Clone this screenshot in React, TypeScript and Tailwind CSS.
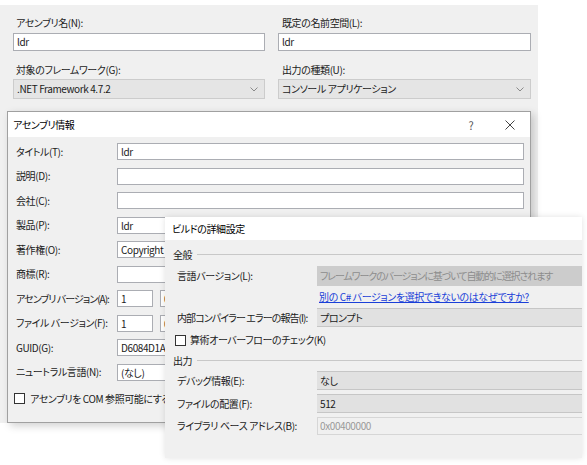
import React from "react";

function TextBox({ value = "", className = "" }: { value?: string; className?: string }) {
  return (
    <div className={"h-[17px] border border-[#abadb3] bg-white pl-[3px] leading-[15px] overflow-hidden whitespace-nowrap " + className}>
      {value}
    </div>
  );
}

function Chevron() {
  return (
    <svg width="8" height="5" viewBox="0 0 8 5" className="shrink-0">
      <path d="M0.5 0.5 L4 4 L7.5 0.5" fill="none" stroke="#8a8a8a" strokeWidth="1" />
    </svg>
  );
}

function Select({ value }: { value: string }) {
  return (
    <div className="h-[20px] border border-[#cccccc] bg-[#e5e5e5] flex items-center pl-[3px] pr-[6px]">
      <span className="flex-1 whitespace-nowrap">{value}</span>
      <Chevron />
    </div>
  );
}

function CheckBox() {
  return <div className="w-[11px] h-[11px] border border-[#333333] bg-white shrink-0" />;
}

function InfoRow({ label, tight, children }: { label: string; tight?: boolean; children: React.ReactNode }) {
  return (
    <div className="flex items-center h-[17px]">
      <div className={"w-[101px] shrink-0 whitespace-nowrap " + (tight ? "tracking-[-0.95px]" : "")}>{label}</div>
      <div className="flex-1 flex gap-[7px]">{children}</div>
    </div>
  );
}

function BuildRow({ label, tight, children, className = "" }: { label: string; tight?: boolean; children: React.ReactNode; className?: string }) {
  return (
    <div className={"flex items-center pl-[4px] " + className}>
      <div className={"w-[140px] shrink-0 whitespace-nowrap " + (tight ? "tracking-[-0.9px]" : "")}>{label}</div>
      <div className="flex-1 -mr-[2px]">{children}</div>
    </div>
  );
}

function GroupHeading({ title, className = "" }: { title: string; className?: string }) {
  return (
    <div className={"flex items-center h-[16px] " + className}>
      <span>{title}</span>
      <div className="flex-1 h-px bg-[#c8c8c8] ml-[5px] -mt-[2px]" />
    </div>
  );
}

export default function App() {
  return (
    <div className="relative w-[587px] h-[465px] overflow-hidden bg-white text-[#1b1b1b] text-[10px] tracking-[-0.4px] leading-[16px] font-['Noto_Sans_CJK_JP','Noto_Sans_CJK_SC',sans-serif] [font-feature-settings:'palt']">
      {/* project properties page */}
      <div className="absolute left-0 top-[5px] w-[538px] h-[418px] bg-[#f0f0f0]">
        <div className="grid grid-cols-[252px_253px] gap-x-[13px] pl-[13px] pt-[10px]">
          <div>
            <div className="pl-[3px]">アセンブリ名(N):</div>
            <TextBox value="ldr" className="mt-[2px] h-[18px] leading-[16px]" />
          </div>
          <div>
            <div className="pl-[4px]">既定の名前空間(L):</div>
            <TextBox value="ldr" className="mt-[2px] h-[18px] leading-[16px]" />
          </div>
          <div className="mt-[11px]">
            <div className="pl-[3px]">対象のフレームワーク(G):</div>
            <div className="mt-[1px]">
              <Select value=".NET Framework 4.7.2" />
            </div>
          </div>
          <div className="mt-[11px]">
            <div className="pl-[4px]">出力の種類(U):</div>
            <div className="mt-[1px]">
              <Select value="コンソール アプリケーション" />
            </div>
          </div>
        </div>
      </div>

      {/* assembly information dialog */}
      <div className="absolute left-[7px] top-[111px] w-[524px] h-[312px] border border-[#a0a0a0] bg-[#f0f0f0] shadow-[3px_3px_8px_rgba(0,0,0,0.18)]">
        <div className="h-[25px] bg-white flex items-center pl-[5px] pr-[15px]">
          <span className="text-black">アセンブリ情報</span>
          <div className="ml-auto flex items-center gap-[29px]">
            <span className="w-[10px] text-center text-[#555] text-[11px]">?</span>
            <svg width="10" height="10" viewBox="0 0 10 10">
              <path d="M0.5 0.5 L9.5 9.5 M9.5 0.5 L0.5 9.5" stroke="#444" strokeWidth="1" />
            </svg>
          </div>
        </div>
        <div className="flex flex-col gap-[7.5px] pl-[8px] pr-[6px] pt-[6px]">
          <InfoRow label="タイトル(T):">
            <TextBox value="ldr" className="flex-1" />
          </InfoRow>
          <InfoRow label="説明(D):">
            <TextBox className="flex-1" />
          </InfoRow>
          <InfoRow label="会社(C):">
            <TextBox className="flex-1" />
          </InfoRow>
          <InfoRow label="製品(P):">
            <TextBox value="ldr" className="flex-1" />
          </InfoRow>
          <InfoRow label="著作権(O):">
            <TextBox value="Copyright © 2019" className="flex-1" />
          </InfoRow>
          <InfoRow label="商標(R):">
            <TextBox className="flex-1" />
          </InfoRow>
          <InfoRow label="アセンブリ バージョン(A):" tight>
            <TextBox value="1" className="w-[36px]" />
            <TextBox value="0" className="w-[36px]" />
            <TextBox value="0" className="w-[36px]" />
            <TextBox value="0" className="w-[36px]" />
          </InfoRow>
          <InfoRow label="ファイル バージョン(F):">
            <TextBox value="1" className="w-[36px]" />
            <TextBox value="0" className="w-[36px]" />
            <TextBox value="0" className="w-[36px]" />
            <TextBox value="0" className="w-[36px]" />
          </InfoRow>
          <InfoRow label="GUID(G):">
            <TextBox value="D6084D1A-3F2C-4B7E-9A15-8E2D6C4B0F71" className="flex-1" />
          </InfoRow>
          <InfoRow label="ニュートラル言語(N):">
            <TextBox value="(なし)" className="w-[240px]" />
          </InfoRow>
        </div>
        <div className="flex items-center gap-[5px] pl-[6px] mt-[10px]">
          <CheckBox />
          <span>アセンブリを COM 参照可能にする(M)</span>
        </div>
      </div>

      {/* advanced build settings dialog */}
      <div className="absolute left-[165px] top-[217px] w-[417px] h-[241px] overflow-hidden bg-[#f0f0f0] shadow-[0_0_6px_rgba(0,0,0,0.12)]">
        <div className="h-[23px] bg-white flex items-center pl-[7px] text-black">ビルドの詳細設定</div>
        <div className="pl-[8px] pt-[7px]">
          <GroupHeading title="全般" />
          <BuildRow label="言語バージョン(L):" className="mt-[3px]">
            <div className="h-[20px] bg-[#cccccc] text-[#8c8c8c] pl-[3px] leading-[20px] tracking-[-1.1px] whitespace-nowrap overflow-hidden">
              フレームワークのバージョンに基づいて自動的に選択されます
            </div>
          </BuildRow>
          <BuildRow label="" className="mt-[3px]">
            <span className="pl-[2px] text-[#1a3fd8] underline">別の C# バージョンを選択できないのはなぜですか?</span>
          </BuildRow>
          <BuildRow label="内部コンパイラー エラーの報告(I):" tight className="mt-[3px]">
            <div className="h-[19px] bg-[#e1e1e1] border-y border-[#c6c6c6] pl-[3px] leading-[17px]">プロンプト</div>
          </BuildRow>
          <div className="flex items-center gap-[4px] pl-[2px] mt-[5px] h-[16px]">
            <CheckBox />
            <span>算術オーバーフローのチェック(K)</span>
          </div>
          <GroupHeading title="出力" className="mt-[5px]" />
          <BuildRow label="デバッグ情報(E):" className="mt-[2px]">
            <div className="h-[19px] bg-[#e1e1e1] border-y border-[#c6c6c6] pl-[3px] leading-[17px]">なし</div>
          </BuildRow>
          <BuildRow label="ファイルの配置(F):" className="mt-[4px]">
            <div className="h-[19px] bg-[#e1e1e1] border-y border-[#c6c6c6] pl-[3px] leading-[17px]">512</div>
          </BuildRow>
          <BuildRow label="ライブラリ ベース アドレス(B):" className="mt-[4px]">
            <div className="h-[18px] bg-[#f0f0f0] border border-[#d6d6d6] pl-[2px] leading-[16px] text-[#9a9a9a]">0x00400000</div>
          </BuildRow>
        </div>
      </div>
    </div>
  );
}
